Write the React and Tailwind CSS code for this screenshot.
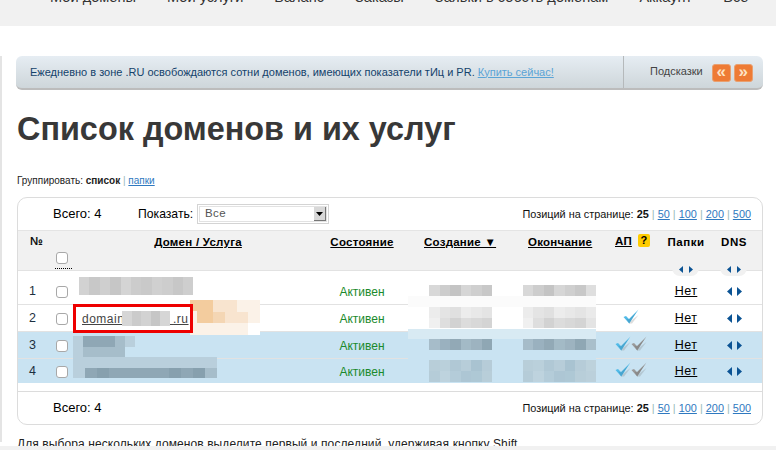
const FONT = { fontFamily: '"Liberation Sans", Arial, sans-serif' };

function Mosaic({ className = "", rows, w = 10, h = 10 }) {
  return (
    <div className={`absolute flex flex-col ${className}`}>
      {rows.map((r, i) => (
        <div key={i} className="flex">
          {r.map((c, j) => (
            <div key={j} style={{ width: w, height: h, background: c }} />
          ))}
        </div>
      ))}
    </div>
  );
}

function Check({ gray }) {
  const c = gray ? "#9a9a9a" : "#52bbe8";
  const d = gray ? "#777777" : "#3f8fb5";
  return (
    <svg width="16" height="16" viewBox="0 0 16 16" className="block shrink-0">
      <path d="M6 14.5 L9 14.5 L15.5 6 L7 12.5 Z" fill="#777" opacity="0.25" />
      <path d="M0.5 8 L3 7 L6 10 L15.5 0.5 L6.2 14.5 Z" fill={c} />
      <path d="M3.5 9.8 L6 10.4 L13 3.5 L6.2 14.5 Z" fill={d} opacity="0.5" />
    </svg>
  );
}

function Arrows({ small }) {
  const cls = small ? "w-[4px] h-[7px]" : "w-[5px] h-[9px]";
  return (
    <span className={`inline-flex items-center ${small ? "gap-[6px]" : "gap-[5px]"}`}>
      <svg viewBox="0 0 5 9" className={cls} preserveAspectRatio="none"><path d="M5 0V9L0 4.5Z" fill="#0b5394" /></svg>
      <svg viewBox="0 0 5 9" className={cls} preserveAspectRatio="none"><path d="M0 0V9L5 4.5Z" fill="#0b5394" /></svg>
    </span>
  );
}

function Box() {
  return <span className="block w-[12px] h-[12px] rounded-[3px] border border-[#a8a8a8] bg-white" />;
}

const COLS = "grid grid-cols-[38px_23px_238px_90px_103px_95px_52px_58px_38px]";

function Row({ n, checks, highlight, className = "" }) {
  return (
    <div className={`${COLS} items-center shrink-0 ${highlight ? "bg-[#c9e3f2]" : "bg-white"} ${className}`}>
      <div className="pl-[11px] text-[#1c2f40] text-[12.5px]">{n}</div>
      <div><Box /></div>
      <div />
      <div className="text-center text-[#1a8a2c] text-[12px]">Активен</div>
      <div />
      <div />
      <div className="flex justify-center h-[16px] -mt-[3px]">
        {checks === 1 && <Check />}
        {checks === 2 && <Check />}
        {checks === 2 && <Check gray />}
      </div>
      <div className="text-center text-black underline text-[12.5px] tracking-[0.45px]">Нет</div>
      <div className="flex justify-center"><Arrows /></div>
    </div>
  );
}

function Pager() {
  return (
    <div className="text-[10.9px] text-[#111]">
      Позиций на странице: <b>25</b> <span className="text-[#9bb]">|</span>{" "}
      {["50", "100", "200", "500"].map((v, i) => (
        <span key={v}>
          <a className="text-[#2f79c0] underline">{v}</a>
          {i < 3 && <span className="text-[#9bb]"> | </span>}
        </span>
      ))}
    </div>
  );
}

const HeadLink = ({ children }) => (
  <span className="underline font-bold text-[11.5px] text-black tracking-[0.25px]">{children}</span>
);

const BTN = "w-[19px] h-[18px] rounded-[3px] bg-[#ee7b35] border border-[#e9a070] text-[#fde3c4] font-bold text-[17px] leading-[13px] text-center";

function DateBlur({ x, w, n }) {
  const pick = (list) => list.slice(0, n);
  return (
    <div className="absolute top-0" style={{ left: x }}>
      <Mosaic className="top-[285px]" w={w} h={11} rows={[pick(["#d8d8d8", "#cdcdcd", "#c4c4c4", "#d6d6d6", "#cfcfcf", "#c8c8c8", "#dedede"])]} />
      <Mosaic className="top-[307px]" w={w} h={10.5} rows={[
        pick(["#ececec", "#e4e4e4", "#e0e0e0", "#ececec", "#e8e8e8", "#e4e4e4", "#eaeaea"]),
        pick(["#f0f0f0", "#dedede", "#d2d2d2", "#dcdcdc", "#d8d8d8", "#d4d4d4", "#e4e4e4"]),
      ]} />
      <Mosaic className="top-[339px]" w={w} h={11} rows={[pick(["#a6bcc9", "#9ab1bf", "#92a9b6", "#a3bac6", "#9db3c0", "#8fa7b4", "#a9bfcb"])]} />
      <Mosaic className="top-[360px]" w={w} h={11} rows={[
        pick(["#b8ced9", "#bad0db", "#b0c8d5", "#b7cdd9", "#a9c3d1", "#b6ccd8", "#bdd2dc"]),
        pick(["#b5ccd8", "#bed3de", "#b4ccd9", "#adc6d4", "#aec8d5", "#b8ced9", "#bbd0db"]),
      ]} />
    </div>
  );
}

export default function App() {
  const g = ["#d2d2d2", "#c8c8c8", "#cfcfcf", "#c6c6c6", "#d4d4d4", "#cccccc", "#c9c9c9", "#d0d0d0", "#cdcdcd", "#c7c7c7", "#cecece"];
  const l1 = "#b9cfdc", d1 = "#8fa7b5", m1 = "#a6bdca", bg = "#c9e3f2";
  const o1 = "#f3cc9e", o2 = "#f8e4cf", o3 = "#f4d6b4", o4 = "#fbf2e8";
  return (
    <div className="relative w-[776px] h-[450px] overflow-hidden bg-white" style={FONT}>
      {/* Top band */}
      <div className="h-[26px] bg-[#f1f1f1] overflow-hidden">
        <div className="flex pl-[50px] gap-[31px] text-[14.6px] text-[#333] -mt-[11px] leading-[16px] whitespace-nowrap">
          <span>Мои домены</span>
          <span>Мои услуги</span>
          <span>Баланс</span>
          <span>Заказы</span>
          <span>Заявки в собств доменам</span>
          <span>Аккаунт</span>
          <span>Все</span>
        </div>
      </div>

      <div className="border-l-2 border-[#e4e4e4] mt-[34px] pl-[14px] pr-[13px] h-[386px]">
        {/* Banner */}
        <div className="-mt-[4px] h-[34px] flex items-stretch rounded-[6px] bg-gradient-to-b from-[#e6edf3] to-[#ced6da] border-b-2 border-[#bcbcbc] text-[11px]">
          <div className="flex-1 flex items-center pl-[14px] text-[#14426b]">
            <span>
              Ежедневно в зоне .RU освобождаются сотни доменов, имеющих показатели тИц и PR.{" "}
              <a className="text-[#5ba4d6] underline">Купить сейчас!</a>
            </span>
          </div>
          <div className="w-[140px] border-l border-[#b5b9bb] flex items-center pl-[26px] gap-[9px] text-[#444]">
            <span className="-mt-[2px]">Подсказки</span>
            <span className="flex gap-[3px] mt-[1px]">
              <span className={BTN}>«</span>
              <span className={BTN}>»</span>
            </span>
          </div>
        </div>

        <h1 className="mt-[20px] ml-[1px] text-[32.4px] leading-[38px] font-bold text-[#383838] whitespace-nowrap">Список доменов и их услуг</h1>

        <div className="mt-[27px] ml-[1px] text-[10px] leading-[12px] text-[#222]">
          Группировать: <b>список</b> <span className="text-[#9bb]">|</span>{" "}
          <a className="text-[#2f79c0] underline">папки</a>
        </div>

        {/* Table */}
        <div className="mt-[10px] ml-[1px] w-[746px] h-[228px] rounded-[10px] border border-[#dcdcdc] flex flex-col overflow-hidden">
          <div className="h-[33px] flex items-center pr-[11px] border-b border-[#e4e4e4] shrink-0">
            <span className="ml-[35px] w-[85px] text-[13px] text-black">Всего: 4</span>
            <span className="w-[59px] text-[12.2px] text-black">Показать:</span>
            <span className="w-[132px] h-[20px] border border-[#d4d4d4] p-[1px]">
              <span className="flex items-center justify-between h-full border border-[#e2e2e2] pl-[5px] text-[11.5px] text-[#555] tracking-[0.4px]">
                Все
                <span className="w-[12px] h-full bg-[#d8d8d8] border-r border-b border-[#777] flex items-center justify-center">
                  <svg width="7" height="4" viewBox="0 0 7 4"><path d="M0 0H7L3.5 4Z" fill="#000" /></svg>
                </span>
              </span>
            </span>
            <span className="ml-auto"><Pager /></span>
          </div>

          <div className={`${COLS} relative h-[40px] bg-[#f1f1f1] border-b border-[#e2e2e2] shrink-0 pt-[2px] text-center leading-[16px]`}>
            <div className="font-bold text-[11.5px] text-[#111] pl-[12px] text-left">№</div>
            <div className="pt-[19px]">
              <Box />
              <div className="mt-[4px] w-[17px] -ml-[1px] border-t border-dotted border-black" />
            </div>
            <div><HeadLink>Домен / Услуга</HeadLink></div>
            <div><HeadLink>Состояние</HeadLink></div>
            <div className="text-left pl-[17px]"><HeadLink>Создание ▼</HeadLink></div>
            <div className="text-left pl-[18px]"><HeadLink>Окончание</HeadLink></div>
            <div className="flex items-start pl-[10px] gap-[6px]">
              <HeadLink>АП</HeadLink>
              <span className="w-[12px] h-[13px] mt-[1px] rounded-[2px] bg-[#ffcc00] text-[11px] leading-[13px] font-bold text-black text-center">?</span>
            </div>
            <div className="whitespace-nowrap"><span className="font-bold text-[11.5px] text-black tracking-[0.55px]">Папки</span></div>
            <div><span className="font-bold text-[11.5px] text-black tracking-[0.55px]">DNS</span></div>
            <span className="absolute left-[654px] top-[34px] w-[27px] h-[11px] rounded-b-[8px] bg-[#f1f1f1] flex items-start justify-center pt-[1px] z-10"><Arrows small /></span>
            <span className="absolute left-[702px] top-[34px] w-[27px] h-[11px] rounded-b-[8px] bg-[#f1f1f1] flex items-start justify-center pt-[1px] z-10"><Arrows small /></span>
          </div>

          <Row n="1" checks={0} className="h-[34px] pt-[8px] border-b border-[#e2e2e2]" />
          <Row n="2" checks={1} className="h-[27px] pt-[1px] border-b border-[#e2e2e2]" />
          <Row n="3" checks={2} highlight className="h-[27px] pt-[1px] border-b border-[#e2e2e2]" />
          <Row n="4" checks={2} highlight className="h-[24px] pt-[1px]" />

          <div className="h-[9px] border-b border-[#dcdcdc] shrink-0" />
          <div className="flex-1 flex items-center pl-[35px] pr-[11px] justify-between">
            <span className="text-[13px] text-black">Всего: 4</span>
            <Pager />
          </div>
        </div>

        <div className="mt-[12px] ml-[1px] text-[12px] leading-[14px] text-[#222] tracking-[0.09px] whitespace-nowrap">
          Для выбора нескольких доменов выделите первый и последний, удерживая кнопку Shift
        </div>
      </div>
      <div className="absolute left-0 right-0 top-[446px] h-[4px] bg-[#f1f1f1]" />

      {/* Privacy mosaics over the table */}
      <Mosaic className="left-[79px] top-[277px]" w={10.4} h={18} rows={[g]} />

      <Mosaic className="left-[190px] top-[300px]" w={11.7} h={11.7} rows={[
        [o1, o1, o2, o2, o4, o4],
        [o1, o1, o3, o2, o2, o4],
        [o4, o4, o4, o4, o4, "#ffffff"],
      ]} />
      <div className="absolute left-[193px] top-[311px] w-[4px] h-[14px] bg-[#fbf2e8]" />

      <div className="absolute left-[73px] top-[304px] w-[120px] h-[29px] border-[3px] border-[#ee0000] bg-white flex items-center pl-[6px]">
        <span className="text-[12px] text-[#444] underline tracking-[0.5px]">domain<span className="text-transparent">xxxxxxxi</span>.ru</span>
      </div>
      <Mosaic className="left-[122px] top-[311px]" w={9.6} h={15} rows={[["#d6d6d6", "#cbcbcb", "#d2d2d2", "#c6c6c6", "#d6d6d6"]]} />

      <Mosaic className="left-[73px] top-[336px]" rows={[
        [l1, d1, d1, d1, m1, l1],
        [l1, m1, m1, m1, m1, bg],
      ]} w={10.4} h={10.5} />
      <div className="absolute left-[73px] top-[357px] w-[144px] h-[11px] bg-[#b9cfdc]" />
      <Mosaic className="left-[73px] top-[368px]" w={12} h={10} rows={[[l1, d1, "#87a0ae", d1, d1, d1, d1, d1, "#87a0ae", d1, "#87a0ae", m1]]} />

      {/* Date columns */}
      <div className="absolute left-[408px] top-[296px] w-[188px] h-[11px] bg-[#fbfbfb]" />
      <div className="absolute left-[408px] top-[329px] w-[188px] h-[10px] bg-[#d8eaf3]" />
      <div className="absolute left-[408px] top-[350px] w-[188px] h-[33px] bg-[#c9e3f2]" />
      <DateBlur x={429} w={10.5} n={6} />
      <DateBlur x={523} w={10.45} n={7} />
    </div>
  );
}
